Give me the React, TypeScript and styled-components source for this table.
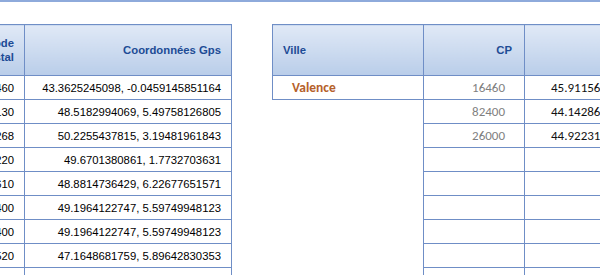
import styled, { createGlobalStyle } from "styled-components";

const GlobalStyle = createGlobalStyle`
  html, body {
    margin: 0;
    padding: 0;
    background: #fff;
    overflow: hidden;
  }
`;

const leftRows = [
  { cp: "64460", gps: "43.3625245098, -0.0459145851164" },
  { cp: "52130", gps: "48.5182994069, 5.49758126805" },
  { cp: "59268", gps: "50.2255437815, 3.19481961843" },
  { cp: "60220", gps: "49.6701380861, 1.7732703631" },
  { cp: "54610", gps: "48.8814736429, 6.22677651571" },
  { cp: "55400", gps: "49.1964122747, 5.59749948123" },
  { cp: "55400", gps: "49.1964122747, 5.59749948123" },
  { cp: "70520", gps: "47.1648681759, 5.89642830353" },
  { cp: "", gps: "" },
];

const rightRows = [
  { ville: "Valence", cp: "16460", gps: "45.9115607, 0.3498" },
  { ville: "", cp: "82400", gps: "44.1428612, 0.8396" },
  { ville: "", cp: "26000", gps: "44.922316, 4.9122" },
  { ville: "", cp: "", gps: "" },
  { ville: "", cp: "", gps: "" },
  { ville: "", cp: "", gps: "" },
  { ville: "", cp: "", gps: "" },
  { ville: "", cp: "", gps: "" },
  { ville: "", cp: "", gps: "" },
];

const App = () => {
  return (
    <Page>
      <GlobalStyle />
      <TopRule />
      <Sheet>
        <LeftTable>
          <colgroup>
            <col style={{ width: 64 }} />
            <col style={{ width: 207 }} />
          </colgroup>
          <thead>
            <tr>
              <HeadCell $align="right">
                Code
                <br />
                postal
              </HeadCell>
              <HeadCell $align="right">Coordonnées Gps</HeadCell>
            </tr>
          </thead>
          <tbody>
            {leftRows.map((row, i) => (
              <tr key={i}>
                <DataCell>{row.cp}</DataCell>
                <DataCell>{row.gps}</DataCell>
              </tr>
            ))}
          </tbody>
        </LeftTable>

        <RightTable>
          <colgroup>
            <col style={{ width: 151 }} />
            <col style={{ width: 101 }} />
            <col style={{ width: 200 }} />
          </colgroup>
          <thead>
            <tr>
              <HeadCell $align="left">Ville</HeadCell>
              <HeadCell $align="right" $padRight={12}>
                CP
              </HeadCell>
              <HeadCell $align="right" />
            </tr>
          </thead>
          <tbody>
            {rightRows.map((row, i) => (
              <tr key={i}>
                <VilleCell $boxed={i === 0}>{row.ville}</VilleCell>
                <CpCell>{row.cp}</CpCell>
                <GpsCell>{row.gps}</GpsCell>
              </tr>
            ))}
          </tbody>
        </RightTable>
      </Sheet>
    </Page>
  );
};

const Page = styled.div`
  width: 600px;
  height: 275px;
  overflow: hidden;
  background: #fff;
`;

const TopRule = styled.div`
  height: 2px;
  background: #8eaadb;
`;

const Sheet = styled.div`
  display: flex;
  align-items: flex-start;
  gap: 40px;
  padding-top: 22px;
  margin-left: -40px;
`;

const BaseTable = styled.table`
  border-collapse: collapse;
  table-layout: fixed;
  flex-shrink: 0;

  th,
  td {
    border: 1px solid #6f8ec6;
    box-sizing: border-box;
  }
`;

const LeftTable = styled(BaseTable)`
  width: 271px;
`;

const RightTable = styled(BaseTable)`
  width: 452px;
`;

const HeadCell = styled.th<{ $align: "left" | "right"; $padRight?: number }>`
  height: 51px;
  padding: 0 ${(p) => p.$padRight ?? 10}px 0 10px;
  text-align: ${(p) => p.$align};
  vertical-align: middle;
  background: linear-gradient(#e0e9f6, #b9cde9);
  color: #1d4b95;
  font-family: "Liberation Sans", Arial, sans-serif;
  font-size: 11.3px;
  font-weight: 700;
  line-height: 14px;
`;

const DataCell = styled.td`
  height: 24px;
  padding: 0 10px;
  text-align: right;
  white-space: nowrap;
  overflow: hidden;
  color: #000;
  font-family: "Liberation Sans", Arial, sans-serif;
  font-size: 11.3px;
`;

const RightCell = styled.td`
  height: 24px;
  white-space: nowrap;
  overflow: hidden;
  font-family: Carlito, Calibri, Lato, sans-serif;
  font-size: 13px;
`;

const VilleCell = styled(RightCell)<{ $boxed: boolean }>`
  padding: 0 0 0 19px;
  color: #b5612b;
  font-weight: 700;
  font-size: 13.5px;

  && {
    border-left-color: ${(p) => (p.$boxed ? "#6f8ec6" : "transparent")};
    border-bottom-color: ${(p) => (p.$boxed ? "#6f8ec6" : "transparent")};
  }
`;

const CpCell = styled(RightCell)`
  padding: 0 19px 0 0;
  text-align: right;
  color: #7f7f7f;
`;

const GpsCell = styled(RightCell)`
  padding: 0 0 0 26px;
  text-align: left;
  color: #111;
`;

export default App;
